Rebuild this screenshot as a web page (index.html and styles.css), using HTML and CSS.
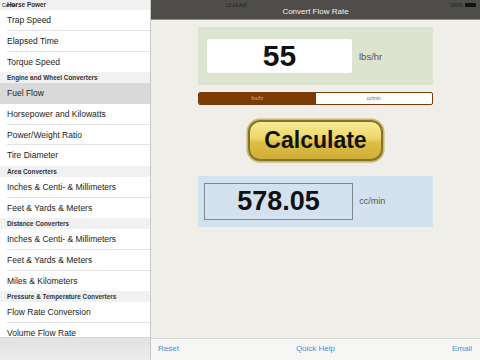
FILE: index.html
```html
<!DOCTYPE html>
<html lang="en">
<head>
  <meta charset="UTF-8">
  <title>Convert Flow Rate</title>
  <link rel="stylesheet" href="styles.css">
</head>
<body>
  <!-- status bar over everything -->
  <div class="status">
    <span class="carrier">Carrier</span>
    <span class="clock">12:14 AM</span>
    <span class="battery">100% <i class="batt"></i></span>
  </div>

  <div class="app">
    <aside class="sidebar">
      <div class="list">
        <div class="section">Horse Power</div>
        <div class="row">Trap Speed</div>
        <div class="row">Elapsed Time</div>
        <div class="row last">Torque Speed</div>
        <div class="section">Engine and Wheel Converters</div>
        <div class="row selected">Fuel Flow</div>
        <div class="row">Horsepower and Kilowatts</div>
        <div class="row">Power/Weight Ratio</div>
        <div class="row last">Tire Diameter</div>
        <div class="section">Area Converters</div>
        <div class="row">Inches &amp; Centi- &amp; Millimeters</div>
        <div class="row last">Feet &amp; Yards &amp; Meters</div>
        <div class="section">Distance Converters</div>
        <div class="row">Inches &amp; Centi- &amp; Millimeters</div>
        <div class="row">Feet &amp; Yards &amp; Meters</div>
        <div class="row last">Miles &amp; Kilometers</div>
        <div class="section">Pressure &amp; Temperature Converters</div>
        <div class="row">Flow Rate Conversion</div>
        <div class="row">Volume Flow Rate</div>
      </div>
      <div class="side-toolbar"></div>
    </aside>

    <main class="pane">
      <header class="nav">Convert Flow Rate</header>

      <div class="content">
        <div class="input-box">
          <div class="field">55</div>
          <span class="unit">lbs/hr</span>
        </div>

        <div class="segments">
          <span class="seg active">lbs/hr</span>
          <span class="seg">cc/min</span>
        </div>

        <button class="calc">Calculate</button>

        <div class="result-box">
          <div class="result">578.05</div>
          <span class="unit">cc/min</span>
        </div>
      </div>

      <footer class="toolbar">
        <a>Reset</a>
        <a>Quick Help</a>
        <a>Email</a>
      </footer>
    </main>
  </div>
</body>
</html>
```

FILE: styles.css
```css
html, body {
  margin: 0;
  padding: 0;
}
body {
  width: 480px;
  height: 360px;
  overflow: hidden;
  position: relative;
  font-family: "Liberation Sans", Arial, sans-serif;
  color: #222;
}

/* status bar */
.status {
  position: absolute;
  top: 0;
  left: 0;
  right: 0;
  height: 9px;
  display: grid;
  grid-template-columns: 1fr auto 1fr;
  align-items: center;
  padding: 0 4px 0 2px;
  font-size: 5px;
  color: #222;
  z-index: 2;
}
.status .clock {
  margin-right: 6px;
}
.status .battery {
  justify-self: end;
  display: flex;
  align-items: center;
  gap: 2px;
}
.batt {
  display: inline-block;
  width: 11px;
  height: 4px;
  background: #111;
  border-radius: 1px;
}

.app {
  display: flex;
  height: 360px;
}

/* sidebar */
.sidebar {
  width: 150px;
  border-right: 1px solid #c9c9c9;
  background: #fff;
  display: flex;
  flex-direction: column;
}
.list {
  flex: 1;
  overflow: hidden;
}
.list > :first-child {
  margin-top: -0.8px;
}
.section {
  height: 11px;
  line-height: 11px;
  padding-left: 7px;
  background: #f1f1f1;
  font-size: 6.4px;
  font-weight: bold;
  color: #333;
}
.row {
  height: 20.7px;
  line-height: 21px;
  padding-left: 7px;
  font-size: 8.5px;
  color: #222;
  white-space: nowrap;
  background-image: linear-gradient(#e2e2e2, #e2e2e2);
  background-size: calc(100% - 7px) 1px;
  background-position: right bottom;
  background-repeat: no-repeat;
}
.row.last {
  background-image: none;
}
.row.selected {
  background-color: #d9d9d9;
  background-image: none;
}
.side-toolbar {
  height: 22px;
  border-top: 1px solid #d4d4d4;
  background: linear-gradient(#e3e3e3, #ececec);
}

/* right pane */
.pane {
  flex: 1;
  display: flex;
  flex-direction: column;
  background: #f0eee8;
}
.nav {
  height: 20px;
  line-height: 23px;
  background: #4e4d4a;
  color: #f2f2f2;
  font-size: 8px;
  text-align: center;
  border-bottom: 1px solid #8a8985;
  box-sizing: border-box;
}
.content {
  flex: 1;
  display: flex;
  flex-direction: column;
  align-items: center;
  padding-top: 7px;
}

.input-box {
  width: 235px;
  height: 58.4px;
  box-sizing: border-box;
  padding: 0 9px;
  background: #dce3cf;
  display: flex;
  align-items: center;
}
.field {
  width: 145px;
  height: 34px;
  line-height: 34px;
  background: #fff;
  border-radius: 2px;
  text-align: center;
  font-size: 30px;
  font-weight: bold;
  color: #111;
}
.unit {
  margin-left: 7px;
  font-size: 9.5px;
  color: #555;
}

.segments {
  margin-top: 6.6px;
  width: 234.6px;
  height: 13.4px;
  box-sizing: border-box;
  border: 1px solid #7b3b06;
  border-radius: 2px;
  background: #fff;
  display: flex;
  overflow: hidden;
}
.seg {
  flex: 1;
  text-align: center;
  font-size: 5px;
  line-height: 11.4px;
  color: #666;
}
.seg.active {
  background: #7b3b05;
  color: #d9b07e;
}

.calc {
  margin-top: 14.3px;
  width: 134.7px;
  height: 41.7px;
  box-sizing: border-box;
  border: 2.5px solid #87722c;
  border-radius: 12px;
  box-shadow: 0 0 0 1.5px #cbb766, 0 1px 2px rgba(0, 0, 0, 0.25);
  background: linear-gradient(#f8eb94, #ecd666 45%, #dcbf44 55%, #cfae38);
  font-family: "Liberation Sans", Arial, sans-serif;
  font-size: 23px;
  font-weight: bold;
  color: #111;
  padding: 0;
}

.result-box {
  margin-top: 14.3px;
  width: 235px;
  height: 51.3px;
  box-sizing: border-box;
  padding: 0 5.6px;
  background: #d4e2ef;
  display: flex;
  align-items: center;
}
.result {
  width: 149.7px;
  height: 37.4px;
  line-height: 35.4px;
  box-sizing: border-box;
  border: 1px solid #7d8792;
  text-align: center;
  font-size: 27px;
  font-weight: bold;
  color: #111;
}
.result-box .unit {
  margin-left: 6px;
  font-size: 9px;
}

.toolbar {
  height: 22.5px;
  box-sizing: border-box;
  border-top: 1px solid #d9d8d4;
  background: #f6f6f4;
  display: flex;
  justify-content: space-between;
  align-items: center;
  padding: 0 8px 1px 7px;
}
.toolbar a {
  font-size: 8px;
  color: #4a8fd8;
}
```
